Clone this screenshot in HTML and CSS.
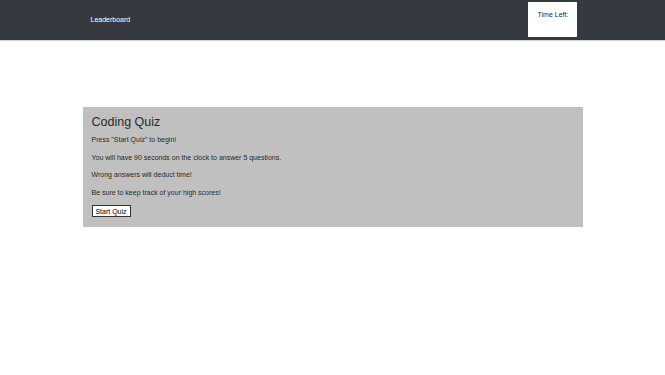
FILE: index.html
```html
<!DOCTYPE html>
<html lang="en">
<head>
    <meta charset="UTF-8">
    <meta name="viewport" content="width=device-width, initial-scale=1.0">
    <title>Coding Quiz</title>
    <link rel="stylesheet" href="styles.css">
</head>
<body>
    <header class="top-bar">
        <div class="top-inner">
            <a class="leaderboard-link" href="#">Leaderboard</a>
            <div class="timer-box">
                <p class="timer-label">Time Left:</p>
            </div>
        </div>
    </header>

    <main class="container">
        <section class="quiz-card">
            <h1 class="quiz-title">Coding Quiz</h1>
            <p>Press "Start Quiz" to begin!</p>
            <p>You will have 90 seconds on the clock to answer 5 questions.</p>
            <p>Wrong answers will deduct time!</p>
            <p>Be sure to keep track of your high scores!</p>
            <button class="start-btn">Start Quiz</button>
        </section>
    </main>
</body>
</html>
```

FILE: styles.css
```css
:root {
    --bar-color: #343a40;
    --card-color: #c0c0c0;
    --text-color: #2a2a2a;
}

* {
    margin: 0;
    padding: 0;
    box-sizing: border-box;
}

body {
    font-family: "Liberation Sans", Arial, sans-serif;
    font-size: 7px;
    line-height: 1.5;
    color: var(--text-color);
    background: #ffffff;
}

.top-bar {
    background: var(--bar-color);
    height: 41px;
    border-bottom: 1px solid #d4d4d4;
}

.top-inner {
    width: 500px;
    margin: 0 auto;
    height: 40px;
    display: flex;
    justify-content: space-between;
    padding: 2px 6px 3px 8px;
}

.leaderboard-link {
    color: #ffffff;
    text-decoration: none;
    align-self: center;
    margin-top: 2px;
}

.timer-box {
    background: #ffffff;
    width: 49px;
    padding: 8px 0 0 10px;
}

.container {
    width: 500px;
    margin: 66px auto 0;
}

.quiz-card {
    background: var(--card-color);
    padding: 8px 9px 9px;
}

.quiz-title {
    font-size: 12.5px;
    font-weight: 400;
    line-height: 1.2;
    margin-bottom: 5px;
}

.quiz-card p {
    margin-bottom: 7px;
}

.start-btn {
    font-family: inherit;
    font-size: 7px;
    line-height: 1;
    color: #000000;
    background: #ffffff;
    border: 1px solid #333333;
    padding: 2px 2px;
    width: 39px;
    height: 12px;
}
```
